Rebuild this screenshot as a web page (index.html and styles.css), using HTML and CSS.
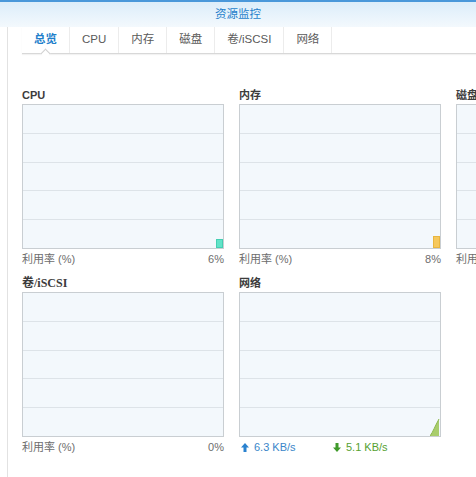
FILE: index.html
```html
<!DOCTYPE html>
<html lang="zh-CN">
<head>
<meta charset="utf-8">
<title>资源监控</title>
<link rel="stylesheet" href="styles.css">
</head>
<body>
<div class="topline"></div>
<header class="titlebar">资源监控</header>
<div class="content">
  <nav class="tabs">
    <div class="tab active">总览</div>
    <div class="tab">CPU</div>
    <div class="tab">内存</div>
    <div class="tab">磁盘</div>
    <div class="tab">卷/iSCSI</div>
    <div class="tab">网络</div>
  </nav>
  <div class="grid">
    <section class="cell">
      <h2 class="title">CPU</h2>
      <div class="chart">
        <div class="band"></div><div class="band"></div><div class="band"></div><div class="band"></div><div class="band"></div>
        <div class="bar bar-cpu"></div>
      </div>
      <div class="foot"><span>利用率 (%)</span><span>6%</span></div>
    </section>
    <section class="cell">
      <h2 class="title">内存</h2>
      <div class="chart">
        <div class="band"></div><div class="band"></div><div class="band"></div><div class="band"></div><div class="band"></div>
        <div class="bar bar-mem"></div>
      </div>
      <div class="foot"><span>利用率 (%)</span><span>8%</span></div>
    </section>
    <section class="cell">
      <h2 class="title">磁盘</h2>
      <div class="chart">
        <div class="band"></div><div class="band"></div><div class="band"></div><div class="band"></div><div class="band"></div>
      </div>
      <div class="foot"><span>利用率 (%)</span><span>0%</span></div>
    </section>
    <section class="cell">
      <h2 class="title serif">卷/iSCSI</h2>
      <div class="chart">
        <div class="band"></div><div class="band"></div><div class="band"></div><div class="band"></div><div class="band"></div>
      </div>
      <div class="foot"><span>利用率 (%)</span><span>0%</span></div>
    </section>
    <section class="cell">
      <h2 class="title">网络</h2>
      <div class="chart">
        <div class="band"></div><div class="band"></div><div class="band"></div><div class="band"></div><div class="band"></div>
        <svg class="net-area" width="10" height="18" viewBox="0 0 10 18">
          <path d="M0 18 C3 14 5 8 9 1 L9 18 Z" fill="#a9cd6c"/>
          <path d="M0 18 C3 14 5 8 9 1" fill="none" stroke="#8cb84e" stroke-width="1"/>
        </svg>
      </div>
      <div class="foot net">
        <span class="up">
          <svg width="8" height="9" viewBox="0 0 8 9"><path d="M4 0 L8 4.5 L5.5 4.5 L5.5 9 L2.5 9 L2.5 4.5 L0 4.5 Z" fill="#2a82cf"/></svg>
          6.3 KB/s
        </span>
        <span class="down">
          <svg width="8" height="9" viewBox="0 0 8 9"><path d="M4 9 L8 4.5 L5.5 4.5 L5.5 0 L2.5 0 L2.5 4.5 L0 4.5 Z" fill="#3f9a2a"/></svg>
          5.1 KB/s
        </span>
      </div>
    </section>
  </div>
</div>
</body>
</html>
```

FILE: styles.css
```css
html, body {
  margin: 0;
  padding: 0;
  height: 100%;
  overflow: hidden;
  background: #ffffff;
  font-family: "Liberation Sans", "Noto Sans CJK SC", sans-serif;
  font-size: 11px;
  color: #555;
}

.topline {
  height: 2px;
  background: #4a98da;
}

.titlebar {
  height: 25px;
  line-height: 25px;
  text-align: center;
  font-size: 11.5px;
  color: #1f7fcb;
  background: linear-gradient(#dcedfa, #f3f9fd);
}

.content {
  margin-left: 7px;
  border-left: 1px solid #e2e2e2;
  padding-left: 14px;
  height: calc(100% - 27px);
  box-sizing: border-box;
}

.tabs {
  display: flex;
  height: 26px;
  border-bottom: 1px solid #d8d8d8;
  box-shadow: 0 1px 1px rgba(0, 0, 0, 0.05);
  background: #fff;
}

.tab {
  position: relative;
  min-width: 48px;
  padding: 0 12px;
  box-sizing: border-box;
  text-align: center;
  line-height: 25px;
  font-size: 11.5px;
  color: #5a5a5a;
  border-right: 1px solid #ececec;
}

.tab.active {
  color: #1f7fcb;
  font-weight: bold;
}

.tab.active::after {
  content: "";
  position: absolute;
  left: 50%;
  bottom: -4px;
  width: 6px;
  height: 6px;
  margin-left: -4px;
  background: #fff;
  border-top: 1px solid #d0d0d0;
  border-left: 1px solid #d0d0d0;
  transform: rotate(45deg);
}

.grid {
  display: grid;
  grid-template-columns: repeat(3, 202px);
  column-gap: 15px;
  row-gap: 12px;
  margin-top: 35px;
  width: 700px;
}

.cell {
  display: flex;
  flex-direction: column;
}

.title {
  margin: 0;
  height: 15px;
  line-height: 13px;
  font-size: 11px;
  font-weight: bold;
  color: #3c3c3c;
}

.title.serif {
  font-family: "Liberation Serif", "Noto Sans CJK SC", serif;
  font-size: 12px;
}

.chart {
  position: relative;
  height: 145px;
  box-sizing: border-box;
  border: 1px solid #c9ced2;
  background: #f3f8fc;
  display: flex;
  flex-direction: column;
}

.band {
  flex: 1;
  border-top: 1px solid #dde3e8;
}

.band:first-child {
  border-top: none;
}

.bar {
  position: absolute;
  right: 0;
  bottom: 0;
  width: 7px;
}

.bar-cpu {
  height: 9px;
  background: #62e3c8;
  box-shadow: inset 0 0 0 1px #45cfb2;
}

.bar-mem {
  height: 12px;
  background: #f6c85c;
  box-shadow: inset 0 0 0 1px #e8b640;
}

.net-area {
  position: absolute;
  right: 0;
  bottom: 0;
}

.foot {
  display: flex;
  justify-content: space-between;
  height: 16px;
  line-height: 20px;
  font-size: 11px;
  color: #6d6d6d;
}

.foot.net {
  justify-content: flex-start;
  padding-left: 2px;
}

.foot .up, .foot .down {
  display: flex;
  align-items: center;
  gap: 5px;
  height: 20px;
}

.foot .up {
  color: #3a86c9;
  width: 92px;
}

.foot .down {
  color: #56a131;
}
```
